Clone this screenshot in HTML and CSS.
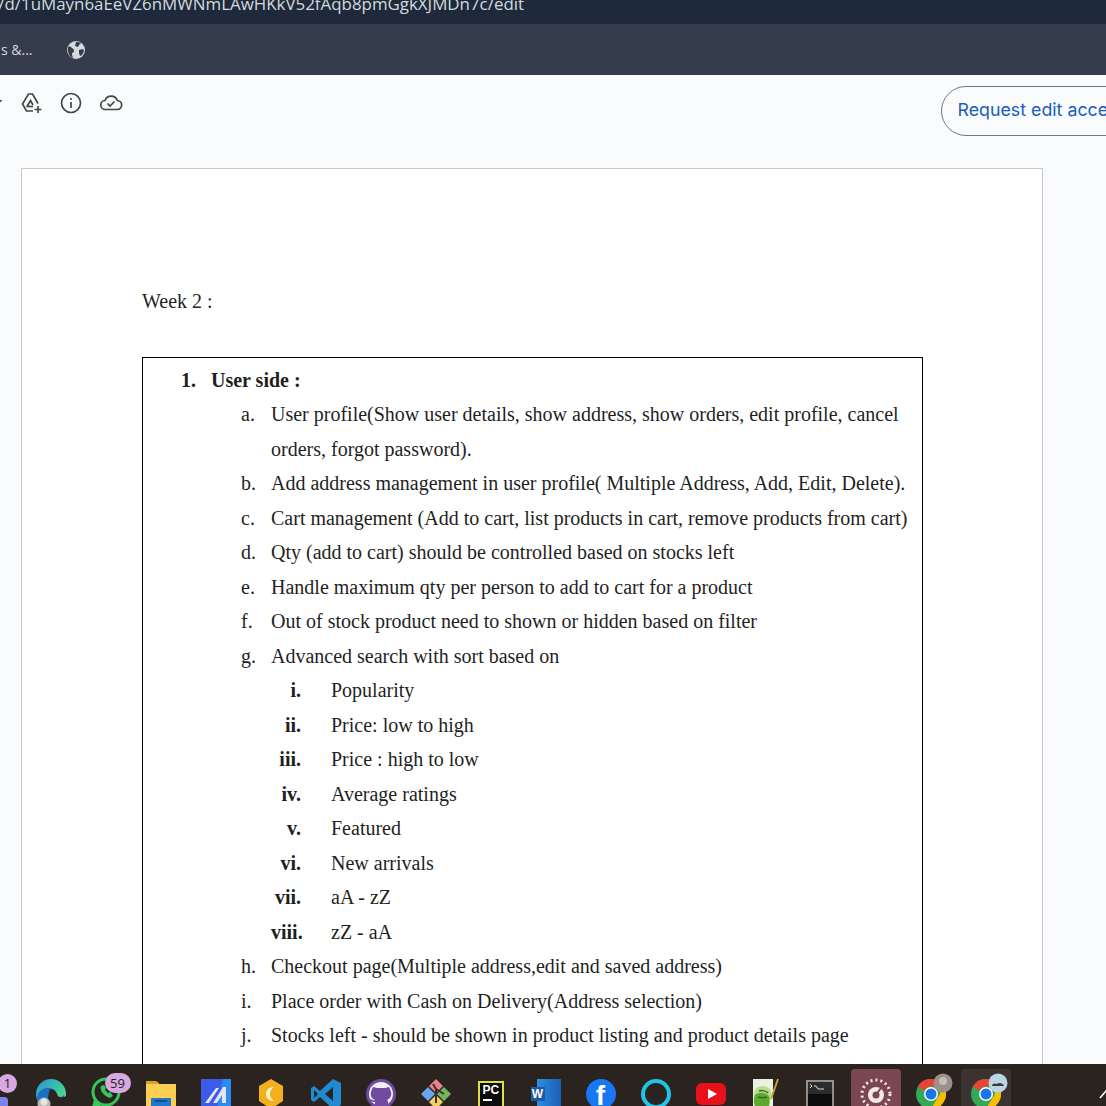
FILE: index.html
```html
<!DOCTYPE html>
<html lang="en">
<head>
    <meta charset="UTF-8">
    <meta name="viewport" content="width=device-width, initial-scale=1.0">
    <title>Week 2 - Google Drive</title>
    <link rel="stylesheet" href="styles.css">
</head>
<body>
    <div class="url-bar">
        <span class="url-text">/d/1uMayn6aEeVZ6nMWNmLAwHKkV52fAqb8pmGgkXJMDn7c/edit</span>
    </div>
    <div class="bookmarks">
        <span class="bookmark-text">s &amp;...</span>
        <svg class="globe" viewBox="0 0 18 18">
            <circle cx="9" cy="9" r="9" fill="#d5d8dd"/>
            <path d="M1 6c2-1 3 0 4 1s2 1 2 3-2 1-2 3 1 3 1 4C3 16 0 12 1 6zM9 1c2 0 3 0 5 1l-2 2-1 2-3-1zM12 9l4-1 1 2-2 4-2 1-1-3z" fill="#353d4d"/>
        </svg>
    </div>

    <div class="viewer">
        <div class="toolbar">
            <div class="tool-icons">
                <svg class="tool-icon tool-star" viewBox="0 0 24 24" fill="none" stroke="#444746" stroke-width="1.7">
                    <path d="M12 3l2.800 6 6.700.8-5 4.500 1.400 6.500-5.900-3.300-5.900 3.300 1.400-6.500-5-4.500 6.700-.8z"/>
                </svg>
                <svg class="tool-icon" viewBox="0 0 24 24" fill="none" stroke="#444746" stroke-width="1.7">
                    <path d="M14 20H7.500L3.500 13 9.500 3h4l5.500 9.500"/>
                    <path d="M8 15.500l3.500-6 2.500 4.500"/>
                    <path d="M7.500 15.500H14"/>
                    <path d="M19 15v7M15.500 18.500h7"/>
                </svg>
                <svg class="tool-icon" viewBox="0 0 24 24" fill="none" stroke="#444746" stroke-width="1.7">
                    <circle cx="12" cy="12" r="9.500"/>
                    <path d="M12 11v6M12 7v1.800"/>
                </svg>
                <svg class="tool-icon" viewBox="0 0 24 24" fill="none" stroke="#444746" stroke-width="1.7">
                    <path d="M6.500 18.500a4.500 4.500 0 0 1-.5-9 6.500 6.500 0 0 1 12.300 0 4.500 4.500 0 0 1-.3 9z"/>
                    <path d="M8.500 12.500l2.500 2.500 4.500-4.500"/>
                </svg>
            </div>
            <a class="request-btn">Request edit access</a>
        </div>

        <div class="page">
            <p class="week">Week 2 :</p>
            <div class="box">
                <ol class="doc-list">
                    <li class="row row-top"><span class="mark">1.</span><span>User side :</span></li>
                    <li class="row row-sub"><span class="mark">a.</span><span>User profile(Show user details, show address, show orders, edit profile, cancel orders, forgot password).</span></li>
                    <li class="row row-sub"><span class="mark">b.</span><span>Add address management in user profile( Multiple Address, Add, Edit, Delete).</span></li>
                    <li class="row row-sub"><span class="mark">c.</span><span>Cart management (Add to cart, list products in cart, remove products from cart)</span></li>
                    <li class="row row-sub"><span class="mark">d.</span><span>Qty (add to cart) should be controlled based on stocks left</span></li>
                    <li class="row row-sub"><span class="mark">e.</span><span>Handle maximum qty per person to add to cart for a product</span></li>
                    <li class="row row-sub"><span class="mark">f.</span><span>Out of stock product need to shown or hidden based on filter</span></li>
                    <li class="row row-sub"><span class="mark">g.</span><span>Advanced search with sort based on</span></li>
                    <li class="row row-roman"><span class="mark">i.</span><span>Popularity</span></li>
                    <li class="row row-roman"><span class="mark">ii.</span><span>Price: low to high</span></li>
                    <li class="row row-roman"><span class="mark">iii.</span><span>Price : high to low</span></li>
                    <li class="row row-roman"><span class="mark">iv.</span><span>Average ratings</span></li>
                    <li class="row row-roman"><span class="mark">v.</span><span>Featured</span></li>
                    <li class="row row-roman"><span class="mark">vi.</span><span>New arrivals</span></li>
                    <li class="row row-roman"><span class="mark">vii.</span><span>aA - zZ</span></li>
                    <li class="row row-roman"><span class="mark">viii.</span><span>zZ - aA</span></li>
                    <li class="row row-sub"><span class="mark">h.</span><span>Checkout page(Multiple address,edit and saved address)</span></li>
                    <li class="row row-sub"><span class="mark">i.</span><span>Place order with Cash on Delivery(Address selection)</span></li>
                    <li class="row row-sub"><span class="mark">j.</span><span>Stocks left - should be shown in product listing and product details page</span></li>
                    <li class="row row-sub row-last"><span class="mark">k.</span><span>Product wishlist</span></li>
                </ol>
            </div>
        </div>
    </div>

    <div class="taskbar">
        <div class="slot">
            <svg viewBox="0 0 30 30"><rect x="5" y="18" width="22" height="12" rx="4" fill="#7b83eb"/></svg>
            <span class="badge badge-small">1</span>
        </div>
        <div class="slot">
            <svg viewBox="0 0 30 30">
                <defs>
                    <linearGradient id="edge-green" x1="0" y1="0" x2="1" y2="1">
                        <stop offset="0" stop-color="#2f8fd8"/>
                        <stop offset=".55" stop-color="#3cc8a0"/>
                        <stop offset="1" stop-color="#7fe060"/>
                    </linearGradient>
                </defs>
                <circle cx="15" cy="15" r="15" fill="url(#edge-green)"/>
                <path d="M1 20C1 12 8 8 14 9c5 1 8 5 6 9 2 1 6 0 8-2v8c-4 5-12 7-18 5-5-2-9-5-9-9z" fill="#1a6fc4"/>
                <path d="M13 17c2-3 6-4 8-2 1 1 1 3-1 4-3 2-6 0-7-2z" fill="#2a2320"/>
                <path d="M14 10c4 0 7 3 7 6 2 3 6 3 9 1v13H14c-2-4-3-12 0-20z" fill="#2a2320"/>
                <circle cx="8" cy="25" r="6.500" fill="#b9b6b4"/>
                <circle cx="8" cy="23" r="3.500" fill="#e8e6e4"/>
            </svg>
        </div>
        <div class="slot">
            <svg viewBox="0 0 30 30">
                <circle cx="15" cy="13" r="13" fill="none" stroke="#34c759" stroke-width="3"/>
                <path d="M3 20l-2 9 9-2z" fill="#34c759"/>
                <path d="M10 7c-2 3 2 10 9 12l3-2-3-4-2 1-3-3 1-2-2-3z" fill="#34c759"/>
            </svg>
            <span class="badge">59</span>
        </div>
        <div class="slot">
            <svg viewBox="0 0 30 30">
                <path d="M0 2h10l3 2v4H0z" fill="#d9a520"/>
                <rect y="5" width="30" height="25" fill="#fbcf54"/>
                <rect x="5" y="19" width="20" height="11" rx="1" fill="#1f78c9"/>
                <rect x="9" y="21" width="12" height="2" fill="#0d4f8f"/>
            </svg>
        </div>
        <div class="slot">
            <svg viewBox="0 0 30 30">
                <rect width="30" height="30" fill="#3b5be8"/>
                <path d="M22 0h8v30H16z" fill="#2b8cf0"/>
                <path d="M4 24L15 9h3L8 24zM12 24L22 8h3v16h-4v-8l-5 8z" fill="#e6e3f8"/>
            </svg>
        </div>
        <div class="slot">
            <svg viewBox="0 0 30 30">
                <path d="M15 0l12 7v15l-12 8-12-8V7z" fill="#f2b01e"/>
                <path d="M18 8c-5 0-8 3-8 7s3 7 8 7c-3-2-4-4-4-7s1-5 4-7z" fill="#fff4d0"/>
            </svg>
        </div>
        <div class="slot">
            <svg viewBox="0 0 30 30">
                <path d="M22 0l8 4v22l-8 4-13-12-6 5-3-2v-12l3-2 6 5z" fill="#1f8ad2"/>
                <path d="M22 8l-8 7 8 7z" fill="#2a2320"/>
                <path d="M3 11l4 4-4 4z" fill="#2a2320"/>
            </svg>
        </div>
        <div class="slot">
            <svg viewBox="0 0 30 30">
                <circle cx="15" cy="15" r="15" fill="#6f4a9e"/>
                <circle cx="15" cy="15" r="12" fill="#f2f0f5"/>
                <path d="M9 27v-4c-3 0-5-1-6-3l4 1c1 0 2 1 2 0-3-1-5-4-4-8l1-3 1-2 4 1h8l4-1 1 2 1 3c1 4-1 7-4 8 1 1 1 2 1 3v4z" fill="#6f4a9e"/>
            </svg>
        </div>
        <div class="slot">
            <svg viewBox="0 0 30 30">
                <path d="M15 0l7 7-7 7-7-7z" fill="#e9808a"/>
                <path d="M23 8l7 7-7 7-7-7z" fill="#6fb85a"/>
                <path d="M7 8l7 7-7 7-7-7z" fill="#6aa5f2"/>
                <path d="M15 16l7 7-7 7-7-7z" fill="#f4cf63"/>
                <path d="M12 5l3 5v14M15 10l8 5" fill="none" stroke="#3a2f2c" stroke-width="2"/>
            </svg>
        </div>
        <div class="slot">
            <div class="pc-icon"><span>PC</span><i></i></div>
        </div>
        <div class="slot">
            <div class="word-icon"><span>W</span></div>
        </div>
        <div class="slot">
            <div class="fb-icon">f</div>
        </div>
        <div class="slot">
            <svg viewBox="0 0 30 30">
                <circle cx="15" cy="15" r="13" fill="none" stroke="#20c4e8" stroke-width="4"/>
            </svg>
        </div>
        <div class="slot">
            <svg viewBox="0 0 30 30">
                <rect y="4" width="30" height="22" rx="6" fill="#e8101a"/>
                <path d="M12 10l9 5-9 5z" fill="#fff"/>
            </svg>
        </div>
        <div class="slot">
            <svg viewBox="0 0 30 30">
                <path d="M2 0h20v30H2z" fill="#e8f2de"/>
                <path d="M5 9c5-3 11-2 14 1 2 5 1 9-1 12H4c-2-4-1-9 1-13z" fill="#b7dc8c"/>
                <path d="M4 16c4-3 10-3 14 1 1 4 1 9-1 13H5c-2-4-3-9-1-14z" fill="#5fa832"/>
                <path d="M8 12c3-1 7 0 9 2M7 18c3 1 6 1 9 0" fill="none" stroke="#2f6a1e" stroke-width="1.500"/>
                <path d="M27 0l-7 20" stroke="#c99a35" stroke-width="2"/>
            </svg>
        </div>
        <div class="slot">
            <svg viewBox="0 0 30 30">
                <rect x="1" y="2" width="26" height="28" fill="#0c0c0c" stroke="#b8b8b8" stroke-width="1.500"/>
                <rect x="2" y="3" width="24" height="12" fill="#2c2c2c"/>
                <path d="M4 5l2 2-2 2M8 7h2l2 3h6" stroke="#ddd" fill="none"/>
            </svg>
        </div>
        <div class="slot slot-active">
            <svg viewBox="0 0 30 30">
                <circle cx="15" cy="15" r="14" fill="none" stroke="#f4e9ea" stroke-width="3" stroke-dasharray="2 3"/>
                <circle cx="15" cy="16" r="8" fill="#f4e9ea"/>
                <circle cx="15" cy="16" r="3.500" fill="#7a4650"/>
                <path d="M15 16l7-10" stroke="#7a4650" stroke-width="2"/>
            </svg>
        </div>
        <div class="slot">
            <svg viewBox="0 0 30 30">
                <use href="#chrome-logo" width="30" height="30"/>
                <circle cx="27" cy="4" r="9.500" fill="#9b918a"/>
                <circle cx="27" cy="2" r="4" fill="#c7bfb6"/>
            </svg>
        </div>
        <div class="slot slot-open">
            <svg viewBox="0 0 30 30">
                <use href="#chrome-logo" width="30" height="30"/>
                <circle cx="27" cy="4" r="9.500" fill="#b9d6e4"/>
                <path d="M21 7c0-3 4-3 5-2 2-2 6-1 7 2z" fill="#3e3a38"/>
            </svg>
        </div>
        <div class="tray">
            <svg class="chevron" viewBox="0 0 14 10"><path d="M1 9l6-7 6 7" fill="none" stroke="#fff" stroke-width="1.600"/></svg>
        </div>
    </div>

    <svg class="svg-defs" width="0" height="0">
        <symbol id="chrome-logo" viewBox="0 0 30 30">
            <circle cx="15" cy="15" r="15" fill="#34a853"/>
            <path d="M15 0a15 15 0 0 1 13 7.500H15a7.500 7.500 0 0 0-7 4.500L2 7a15 15 0 0 1 13-7z" fill="#ea4335"/>
            <path d="M28 7.500A15 15 0 0 1 15 30l6.500-11a7.500 7.500 0 0 0 0-11.500z" fill="#fbbc04"/>
            <circle cx="15" cy="15" r="7" fill="#fff"/>
            <circle cx="15" cy="15" r="5.500" fill="#1a73e8"/>
        </symbol>
    </svg>
</body>
</html>
```

FILE: styles.css
```css
html, body {
    height: 100%;
}
body {
    margin: 0;
    height: 1106px;
    overflow: hidden;
    display: flex;
    flex-direction: column;
    background-color: #f9fbfd;
    font-family: "Liberation Serif", serif;
}

.url-bar {
    height: 24px;
    width: 524px;
    flex-shrink: 0;
    display: flex;
    justify-content: flex-end;
    box-sizing: content-box;
    padding-right: 582px;
    background-color: #1e293b;
    overflow: hidden;
}
.url-text {
    font-family: "Open Sans", sans-serif;
    font-size: 16.9px;
    line-height: 20px;
    margin-top: -6px;
    color: #d5d9df;
    white-space: nowrap;
}

.bookmarks {
    height: 51px;
    flex-shrink: 0;
    display: flex;
    align-items: center;
    gap: 34px;
    padding-left: 1px;
    background-color: #353d4d;
}
.bookmark-text {
    font-family: "Open Sans", sans-serif;
    font-size: 14px;
    color: #d5d9df;
}
.globe {
    width: 18px;
    height: 18px;
}

.viewer {
    flex: 1;
    min-height: 0;
    overflow: hidden;
}
.toolbar {
    height: 93px;
    box-sizing: border-box;
    display: flex;
    justify-content: space-between;
    align-items: flex-start;
    padding-left: 19px;
}
.tool-icons {
    display: flex;
    gap: 16px;
    padding-top: 16px;
}
.tool-icon {
    width: 24px;
    height: 24px;
}
.tool-star {
    margin-left: -40px;
}
.request-btn {
    box-sizing: border-box;
    flex-shrink: 0;
    width: 230px;
    height: 50px;
    margin-top: 11px;
    margin-right: -65px;
    padding-left: 15.5px;
    border: 1px solid #747775;
    border-radius: 25px;
    font-family: Inter, sans-serif;
    font-size: 17.8px;
    line-height: 46px;
    color: #1a5cbf;
    white-space: nowrap;
}

.page {
    width: 1022px;
    margin-left: 21px;
    box-sizing: border-box;
    padding: 120px 120px 0;
    background-color: #fff;
    border: 1px solid #c7c7c7;
    color: #1f1f1f;
    font-size: 20px;
}
.week {
    margin: 0 0 44px;
    line-height: 24px;
}
.box {
    border: 1px solid #000;
    width: 781px;
    box-sizing: border-box;
}
.doc-list {
    list-style: none;
    margin: 0;
    padding: 4.5px 12px 0 0;
}
.row {
    display: flex;
    line-height: 34.5px;
}
.mark {
    flex-shrink: 0;
}
.row-top {
    font-weight: bold;
    padding-left: 38px;
}
.row-top .mark {
    width: 30px;
}
.row-sub {
    padding-left: 98px;
}
.row-sub .mark {
    width: 30px;
}
.row-last {
    margin-top: 1px;
}
.row-roman {
    padding-left: 128px;
}
.row-roman .mark {
    width: 60px;
    padding-right: 30px;
    box-sizing: border-box;
    text-align: right;
    font-weight: bold;
}

.taskbar {
    height: 42px;
    flex-shrink: 0;
    display: flex;
    position: relative;
    margin-left: -32px;
    background-color: #2a2320;
}
.slot {
    position: relative;
    width: 55px;
    flex-shrink: 0;
    box-sizing: border-box;
    padding: 15px 12.5px 0;
}
.slot svg {
    display: block;
    width: 30px;
    height: 30px;
    overflow: visible;
}
.slot-active::before, .slot-open::before {
    content: "";
    position: absolute;
    left: 2.5px;
    top: 5px;
    width: 50px;
    height: 37px;
    border-radius: 4px 4px 0 0;
    background-color: #7a4650;
}
.slot-open::before {
    background-color: #3a3332;
}
.slot svg, .slot > div {
    position: relative;
}
.badge {
    position: absolute;
    left: 26.5px;
    top: 9px;
    width: 26px;
    height: 20px;
    border-radius: 10px;
    background-color: #d8a8e0;
    color: #222;
    font-family: "Open Sans", sans-serif;
    font-size: 13px;
    line-height: 20px;
    text-align: center;
}
.badge-small {
    left: 30px;
    top: 10px;
    width: 19px;
    height: 19px;
    line-height: 19px;
}
.pc-icon {
    box-sizing: border-box;
    width: 26px;
    height: 28px;
    margin-left: 2px;
    margin-top: 2px;
    background-color: #0c0c0c;
    border: 2px solid #e2e23c;
    color: #fff;
    font-family: "Liberation Sans", sans-serif;
    font-weight: bold;
    font-size: 12px;
    line-height: 14px;
    padding-left: 3px;
}
.pc-icon i {
    display: block;
    width: 9px;
    height: 2px;
    margin-top: 2px;
    background-color: #fff;
}
.word-icon {
    width: 30px;
    height: 30px;
    box-sizing: border-box;
    padding-top: 8px;
    background: linear-gradient(90deg, transparent 6px, #2b8fe0 6px, #1a5fb4);
}
.word-icon span {
    display: block;
    width: 14px;
    height: 14px;
    background-color: #1e5aa8;
    color: #fff;
    font-family: "Liberation Sans", sans-serif;
    font-weight: bold;
    font-size: 12px;
    line-height: 14px;
    text-align: center;
}
.fb-icon {
    width: 30px;
    height: 30px;
    border-radius: 50%;
    background-color: #1877f2;
    color: #fff;
    font-family: "Liberation Sans", sans-serif;
    font-weight: bold;
    font-size: 28px;
    line-height: 34px;
    text-align: center;
}
.tray {
    margin-left: 86px;
    padding-top: 25px;
}
.tray .chevron {
    display: block;
    width: 14px;
    height: 10px;
}
.svg-defs {
    position: absolute;
}
```
